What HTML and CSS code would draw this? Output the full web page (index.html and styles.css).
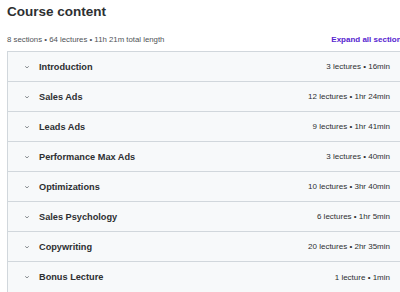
FILE: index.html
```html
<!DOCTYPE html>
<html lang="en">
<head>
    <meta charset="UTF-8">
    <title>Course content</title>
    <link rel="stylesheet" href="styles.css">
</head>
<body>
    <div class="page">
        <h2 class="title">Course content</h2>

        <div class="meta-row">
            <span class="meta">8 sections • 64 lectures • 11h 21m total length</span>
            <button class="expand">Expand all sections</button>
        </div>

        <div class="sections">
            <div class="section">
                <span class="chevron"><svg viewBox="0 0 8 8"><path d="M2.2 3.3 L4 4.9 L5.8 3.3"/></svg></span>
                <span class="name">Introduction</span>
                <span class="info">3 lectures • 16min</span>
            </div>
            <div class="section">
                <span class="chevron"><svg viewBox="0 0 8 8"><path d="M2.2 3.3 L4 4.9 L5.8 3.3"/></svg></span>
                <span class="name">Sales Ads</span>
                <span class="info">12 lectures • 1hr 24min</span>
            </div>
            <div class="section">
                <span class="chevron"><svg viewBox="0 0 8 8"><path d="M2.2 3.3 L4 4.9 L5.8 3.3"/></svg></span>
                <span class="name">Leads Ads</span>
                <span class="info">9 lectures • 1hr 41min</span>
            </div>
            <div class="section">
                <span class="chevron"><svg viewBox="0 0 8 8"><path d="M2.2 3.3 L4 4.9 L5.8 3.3"/></svg></span>
                <span class="name">Performance Max Ads</span>
                <span class="info">3 lectures • 40min</span>
            </div>
            <div class="section">
                <span class="chevron"><svg viewBox="0 0 8 8"><path d="M2.2 3.3 L4 4.9 L5.8 3.3"/></svg></span>
                <span class="name">Optimizations</span>
                <span class="info">10 lectures • 3hr 40min</span>
            </div>
            <div class="section">
                <span class="chevron"><svg viewBox="0 0 8 8"><path d="M2.2 3.3 L4 4.9 L5.8 3.3"/></svg></span>
                <span class="name">Sales Psychology</span>
                <span class="info">6 lectures • 1hr 5min</span>
            </div>
            <div class="section">
                <span class="chevron"><svg viewBox="0 0 8 8"><path d="M2.2 3.3 L4 4.9 L5.8 3.3"/></svg></span>
                <span class="name">Copywriting</span>
                <span class="info">20 lectures • 2hr 35min</span>
            </div>
            <div class="section">
                <span class="chevron"><svg viewBox="0 0 8 8"><path d="M2.2 3.3 L4 4.9 L5.8 3.3"/></svg></span>
                <span class="name">Bonus Lecture</span>
                <span class="info">1 lecture • 1min</span>
            </div>
        </div>
    </div>
</body>
</html>
```

FILE: styles.css
```css
* {
    box-sizing: border-box;
    font-family: "Liberation Sans", Arial, sans-serif;
}

body {
    margin: 0;
    background: #fff;
    color: #2d2f31;
    overflow: hidden;
}

.page {
    width: 406px;
    padding-left: 7px;
}

.title {
    margin: 0;
    padding-top: 3px;
    font-size: 13.5px;
    line-height: 17px;
    font-weight: bold;
}

.meta-row {
    display: flex;
    justify-content: space-between;
    align-items: center;
    height: 11px;
    margin-top: 14px;
    margin-bottom: 6px;
}

.meta {
    font-size: 7.8px;
    color: #4f5357;
}

.expand {
    border: none;
    background: none;
    padding: 0;
    font-size: 8px;
    font-weight: bold;
    color: #5624d0;
    cursor: pointer;
    white-space: nowrap;
}

.sections {
    border: 1px solid #d1d7dc;
    border-right: none;
}

.section {
    display: flex;
    align-items: center;
    height: 30px;
    background: #f7f9fa;
    border-bottom: 1px solid #d1d7dc;
    padding: 0 16px 0 15px;
}

.section:last-child {
    border-bottom: none;
}

.chevron {
    width: 8px;
    height: 8px;
    margin-right: 8px;
}

.chevron svg {
    width: 8px;
    height: 8px;
    display: block;
    fill: none;
    stroke: #6a6f73;
    stroke-width: 0.8;
}

.name {
    flex: 1;
    font-size: 9.2px;
    font-weight: bold;
    color: #2d2f31;
}

.info {
    font-size: 8px;
    color: #2d2f31;
}
```
